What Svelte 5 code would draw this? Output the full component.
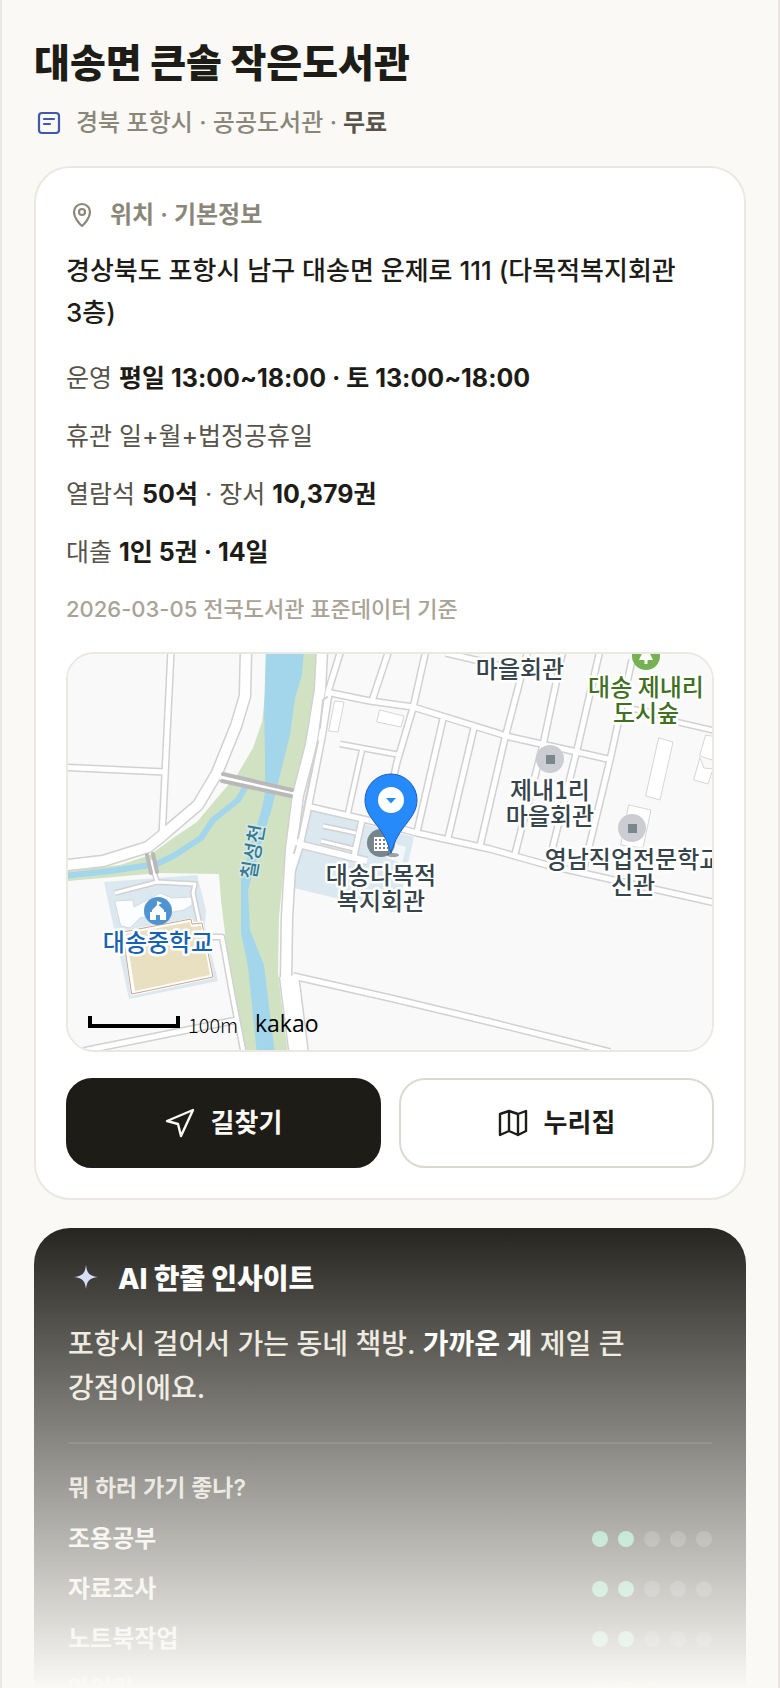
<script>
  const library = {
    name: '대송면 큰솔 작은도서관',
    region: '경북 포항시',
    type: '공공도서관',
    fee: '무료',
    address: '경상북도 포항시 남구 대송면 운제로 111 (다목적복지회관 3층)'
  };

  const purposes = [
    { label: '조용공부', score: 2 },
    { label: '자료조사', score: 2 },
    { label: '노트북작업', score: 2 },
    { label: '아이랑', score: 3 }
  ];

  // road centre lines, [path, width]
  const roads = [
    ['M246 650 L245 696 L236 726 L217 773 L198 805 L164 834 L148 847 L103 861 L60 866', 12],
    ['M171 650 L162 838', 7],
    ['M60 767 L165 772', 7],
    ['M322 650 L320 690 L311 745 L298 795 L291 850 L287 917 L286 980', 12],
    ['M329 690 L322 735 L307 812 L299 848 L290 876', 8],
    ['M289 976 L299 1055', 20],
    ['M341 650 L328 692', 7],
    ['M326 692 L370 701 L413 707 L510 737 L577 752 L612 760', 7],
    ['M389 650 L372 701', 7],
    ['M426 650 L413 708 L397 762 L384 822', 7],
    ['M443 719 L417 832', 7],
    ['M474 728 L448 838', 7],
    ['M528 650 L505 738 L480 846', 7],
    ['M563 650 L543 745 L515 854', 7],
    ['M600 650 L577 750 L549 862', 7],
    ['M632 660 L610 760 L583 872', 7],
    ['M306 806 L380 823 L417 833 L490 849 L547 865 L716 903', 7],
    ['M340 744 L400 755', 6],
    ['M362 750 L348 813', 6],
    ['M446 653 L497 665 L536 672', 7],
    ['M627 708 L650 712 L677 722 L716 731', 6],
    ['M293 976 L390 998 L490 1022 L610 1052', 7],
    ['M78 1052 L237 1020', 7],
    ['M212 937 L222 937 L232 993 L244 1055', 6],
    ['M302 845 L367 861', 8],
    ['M362 820 L354 856', 7],
    ['M323 826 L356 833', 5],
    ['M321 841 L354 849', 5],
    ['M115 893 L157 882 L195 884 L193 893 L199 921', 5],
    ['M151 860 L157 882', 5]
  ];

  const buildings = [
    'M335 701 L344 702 L338 732 L329 731 Z',
    'M380 710 L404 716 L401 727 L377 722 Z',
    'M659 738 L673 742 L660 800 L646 796 Z',
    'M629 805 L651 810 L643 848 L621 845 Z',
    'M706 735 L716 737 L712 760 L700 756 Z',
    'M700 758 L704 768 L713 769 L708 784 L694 780 Z'
  ];

  const places = [
    { lines: ['마을회관'], x: 520, y: 678 },
    { lines: ['대송 제내리', '도시숲'], x: 646, y: 696, kind: 'park' },
    { lines: ['제내1리', '마을회관'], x: 550, y: 799 },
    { lines: ['영남직업전문학교', '신관'], x: 633, y: 868 },
    { lines: ['대송다목적', '복지회관'], x: 381, y: 884 },
    { lines: ['대송중학교'], x: 158, y: 951, kind: 'school' }
  ];
</script>

<div class="page">
  <header>
    <h1>{library.name}</h1>
    <p class="meta">
      <svg class="meta-icon" viewBox="0 0 30 30" aria-hidden="true">
        <rect x="5" y="5" width="20" height="20" rx="3" />
        <path d="M10 11 H20 M10 16 H16" />
      </svg>
      <span>{library.region} · {library.type} ·</span>
      <strong>{library.fee}</strong>
    </p>
  </header>

  <section class="card">
    <h2>
      <svg class="label-icon" viewBox="0 0 32 32" aria-hidden="true">
        <path d="M16 27 C13 24.500 8 18.500 8 13 A8 8 0 0 1 24 13 C24 18.500 19 24.500 16 27 Z" />
        <circle cx="16" cy="13" r="3" />
      </svg>
      위치 · 기본정보
    </h2>
    <p class="address">{library.address}</p>
    <div class="facts">
      <p>운영 <strong>평일 13:00~18:00 · 토 13:00~18:00</strong></p>
      <p>휴관 일+월+법정공휴일</p>
      <p>열람석 <strong>50석</strong> · 장서 <strong>10,379권</strong></p>
      <p>대출 <strong>1인 5권 · 14일</strong></p>
      <p class="source">2026-03-05 전국도서관 표준데이터 기준</p>
    </div>

    <div class="map">
      <svg viewBox="68 654 644 396" preserveAspectRatio="xMidYMid slice" role="img" aria-label="지도">
        <rect x="0" y="600" width="800" height="500" fill="#f9f9f9" />

        <!-- river -->
        <path fill="#d1e2c2" d="M266 650 H317 L315 685 L307 738 L293 792 L285 855 L279 917 L278 973 L282 1007 L288 1055 H246 L227 950 L221 900 L219 874 L160 873 L68 881 V871 L120 865 L150 855 L173 838 L197 822 L217 798 L237 775 L253 748 L262 722 L265 695 Z" />
        <path fill="#a3d6eb" d="M266 650 H304 L302 675 L295 698 L290 735 L278 783 L272 808 L262 840 L248 890 L250 930 L264 965 L275 1055 H257 L248 967 L241 933 L241 880 L254 835 L262 808 L265 792 L265 755 L264 712 Z" />
        <path class="stream" d="M245 788 L238 800 L213 820 L201 838 L175 855 L157 864 L110 871 L64 876" />

        <!-- grounds -->
        <path fill="#dbe8f0" d="M310 810 L414 837 L397 913 L290 887 L302 846 Z" />
        <path fill="#dbe8f0" d="M104 882 L197 875 L206 910 L205 927 L218 981 L129 999 Z" />
        <path fill="#fff" d="M122 931 L192 918 L193 922 L203 921 L214 978 L131 996 Z" />
        <path class="track" d="M123 932 L191 919 L192 924 L202 923 L213 977 L132 994 Z" />
        <path fill="#e9dfc1" d="M126 934 L190 922 L191 927 L201 926 L210 975 L135 991 Z" />
        <path class="hall" d="M115 901 L133 900 L134 907 L160 893 L172 898 L192 897 L192 905 L184 910 L140 918 L130 928 L121 926 Z" />

        {#each roads as [d, width]}
          <path class="road-edge" {d} stroke-width={width + 1} />
        {/each}
        {#each roads as [d, width]}
          <path class="road" {d} stroke-width={width - 2} />
        {/each}
        <path class="median" d="M327 697 L323 700 L320 728 M318 741 L298 838 M296 846 L294 853" />

        {#each buildings as d}
          <path class="building" {d} />
        {/each}
        <path fill="#f2f7fb" d="M389 842 L406 847 L402 863 L386 858 Z" />

        <path class="bridge-deck" d="M222 778 L292 793" />
        <path class="bridge" d="M223 774 L292 790 M222 781 L291 796 M147 855 L151 873 M153 854 L157 872" />

        <!-- markers -->
        <circle cx="646" cy="656" r="14" fill="#76b152" />
        <path fill="#fff" d="M646 645 L653 660 H647.500 V664 H644.500 V660 H639 Z" />
        {#each [[550, 759], [632, 828]] as [cx, cy]}
          <circle {cx} {cy} r="14" fill="#cccdd2" />
          <rect x={cx - 4} y={cy - 4} width="9" height="9" fill="#7a888d" />
        {/each}
        <circle cx="158" cy="911" r="14" fill="#4f94d1" />
        <path fill="#fff" d="M157 901 L162 903 L158.500 905 L164 910 V912 H166 V920 H160 V915 H156 V920 H150 V912 H152 V910 L157 905 Z" />
        <circle cx="381" cy="843" r="14" fill="#77868d" />
        <rect x="374" y="837" width="14" height="14" fill="#fff" />
        <path class="windows" d="M375 840 H388 M375 844 H388 M375 848 H388" />

        <text class="river-name" text-anchor="middle" transform="translate(260 853) rotate(-80)">칠성천</text>
        {#each places as place}
          <text class="place {place.kind ?? ''}" text-anchor="middle">
            {#each place.lines as line, i}
              <tspan x={place.x} y={place.y + i * 26}>{line}</tspan>
            {/each}
          </text>
        {/each}

        <ellipse cx="393" cy="855" rx="6" ry="2" fill="#000" opacity="0.35" />
        <path class="pin" d="M391 853 C387 839 382 832 375 823 C369 815 365 809 365 800 A26 26 0 0 1 417 800 C417 809 413 815 407 823 C400 832 395 839 391 853 Z" />
        <circle cx="391" cy="800" r="13" fill="#fff" />
        <path fill="#268afa" d="M386 798 H396 L391 803.500 Z" />

        <path class="scale" d="M90 1016 V1026 H178 V1016" />
        <text class="scale-text" x="188" y="1033">100m</text>
        <text class="brand" x="255" y="1032">kakao</text>
      </svg>
    </div>

    <div class="actions">
      <button class="primary" type="button">
        <svg viewBox="0 0 30 30" aria-hidden="true">
          <path d="M28 2 L2 13 L13 16 L16 28 Z" />
        </svg>
        길찾기
      </button>
      <button type="button">
        <svg viewBox="0 0 30 30" aria-hidden="true">
          <path d="M2 6 L11 3 L20 6 L28 3 V23 L20 27 L11 23 L2 27 Z M11 3 V23 M20 6 V27" />
        </svg>
        누리집
      </button>
    </div>
  </section>

  <section class="insight">
    <h2>
      <svg viewBox="0 0 36 36" aria-hidden="true">
        <path d="M18 4 C19 12 21 15 30 16 C21 17 19 20 18 28 C17 20 15 17 6 16 C15 15 17 12 18 4 Z" />
      </svg>
      AI 한줄 인사이트
    </h2>
    <p class="summary">포항시 걸어서 가는 동네 책방. <strong>가까운 게</strong> 제일 큰 강점이에요.</p>

    <div class="purposes">
      <h3>뭐 하러 가기 좋나?</h3>
      <ul>
        {#each purposes as purpose}
          <li>
            <span>{purpose.label}</span>
            <span class="dots">
              {#each [1, 2, 3, 4, 5] as n}
                <i class:on={n <= purpose.score}></i>
              {/each}
            </span>
          </li>
        {/each}
      </ul>
    </div>
  </section>

  <div class="fade"></div>
</div>

<style>
  :global(body) {
    margin: 0;
    background: #faf9f5;
  }

  .page {
    position: relative;
    box-sizing: border-box;
    height: 100vh;
    overflow: hidden;
    padding: 38px 32px 0;
    border: solid #ebe8e1;
    border-width: 0 2px;
    color: #1d1c17;
    font-family: Inter, 'Noto Sans CJK KR', sans-serif;
    font-size: 24px;
    line-height: 38px;
    word-break: keep-all;
  }

  h1,
  h2,
  h3,
  p,
  ul {
    margin: 0;
    padding: 0;
  }

  h1 {
    font-size: 39px;
    font-weight: 800;
    line-height: 50px;
  }

  svg {
    flex: none;
    fill: none;
    stroke-linecap: round;
    stroke-linejoin: round;
  }

  .meta {
    display: flex;
    align-items: center;
    margin-top: 16px;
    color: #8b867a;
    font-weight: 500;
  }

  .meta strong {
    margin-left: 6px;
    color: #57534a;
    font-weight: 600;
  }

  .meta-icon {
    width: 30px;
    height: 30px;
    margin-right: 12px;
    stroke: #3f5aa9;
    stroke-width: 2.2;
  }

  .card {
    margin-top: 24px;
    padding: 28px 30px 30px;
    border: 2px solid #ebe8e1;
    border-radius: 36px;
    background: #fff;
  }

  .card h2 {
    display: flex;
    align-items: center;
    gap: 12px;
    color: #8b867a;
    font-size: 24px;
    font-weight: 600;
  }

  .label-icon {
    width: 32px;
    height: 32px;
    stroke: #8b867a;
    stroke-width: 2.2;
  }

  .address {
    margin-top: 16px;
    font-size: 26px;
    font-weight: 500;
    line-height: 42px;
  }

  .facts {
    display: flex;
    flex-direction: column;
    gap: 20px;
    margin-top: 25px;
    color: #57534a;
    font-size: 25px;
  }

  .facts strong {
    color: #1d1c17;
    font-weight: 700;
  }

  .facts .source {
    color: #a8a396;
    font-size: 22px;
    font-weight: 500;
    line-height: 36px;
  }

  .map {
    box-sizing: border-box;
    height: 400px;
    margin-top: 25px;
    overflow: hidden;
    border: 2px solid #ebe8e1;
    border-radius: 28px;
  }

  .map svg {
    display: block;
    width: 100%;
    height: 100%;
  }

  .road-edge {
    stroke: #d1d1d1;
    stroke-linecap: butt;
  }

  .road {
    stroke: #fff;
    stroke-linecap: butt;
  }

  .median {
    stroke: #d1d1d1;
    stroke-width: 2;
  }

  .stream {
    stroke: #a3d6eb;
    stroke-width: 6;
  }

  .track {
    stroke: #c9a58c;
    stroke-width: 1;
  }

  .hall {
    fill: #fcfdff;
    stroke: #d5dade;
  }

  .building {
    fill: #fff;
    stroke: #d6d6d6;
  }

  .bridge-deck {
    stroke: #fff;
    stroke-width: 5;
  }

  .bridge {
    stroke: #b9b9b9;
    stroke-width: 4;
  }

  .windows {
    stroke: #77868d;
    stroke-width: 2;
    stroke-dasharray: 2 2;
    stroke-linecap: butt;
  }

  .pin {
    fill: #268afa;
    stroke: #1860c8;
  }

  .scale {
    stroke: #000;
    stroke-width: 4;
    stroke-linecap: butt;
    stroke-linejoin: miter;
  }

  .map text {
    font-family: 'Noto Sans CJK KR', sans-serif;
  }

  .map .place,
  .map .river-name {
    fill: #36444b;
    stroke: #fff;
    stroke-width: 5;
    paint-order: stroke;
    font-size: 24px;
    font-weight: 500;
  }

  .map .park {
    fill: #41701f;
  }

  .map .school {
    fill: #1763b3;
  }

  .map .river-name {
    fill: #357894;
    stroke: #d5e9e6;
    stroke-width: 3;
    font-size: 20px;
  }

  .map .scale-text {
    fill: #000;
    font-size: 20px;
    font-weight: 300;
  }

  .map .brand {
    fill: #000;
    font-family: 'Open Sans', sans-serif;
    font-size: 23px;
    font-weight: 500;
  }

  .actions {
    display: grid;
    grid-template-columns: 1fr 1fr;
    gap: 18px;
    margin-top: 26px;
  }

  button {
    display: flex;
    align-items: center;
    justify-content: center;
    gap: 16px;
    height: 90px;
    padding: 0;
    border: 2px solid #dcd9d0;
    border-radius: 26px;
    background: #fff;
    color: #1d1c17;
    font: inherit;
    font-size: 26px;
    font-weight: 600;
  }

  button svg {
    width: 30px;
    height: 30px;
    stroke: currentColor;
    stroke-width: 2.4;
  }

  .primary {
    border-color: #1d1c17;
    background: #1d1c17;
    color: #faf9f5;
  }

  .insight {
    margin-top: 28px;
    padding: 32px 34px;
    border-radius: 36px;
    background: #1d1c17;
    color: #f1eee6;
  }

  .insight h2 {
    display: flex;
    align-items: center;
    gap: 14px;
    color: #fff;
    font-size: 28px;
    font-weight: 800;
  }

  .insight svg {
    width: 36px;
    height: 36px;
    fill: #d0d9fa;
  }

  .summary {
    margin-top: 24px;
    color: #e9e5da;
    font-size: 28px;
    font-weight: 500;
    line-height: 44px;
  }

  .summary strong {
    color: #fff;
    font-weight: 700;
  }

  .purposes {
    margin-top: 32px;
    padding-top: 26px;
    border-top: 2px solid #33322d;
  }

  h3 {
    color: #d8d4c8;
    font-size: 23px;
    font-weight: 600;
    line-height: 36px;
  }

  ul {
    margin-top: 8px;
    list-style: none;
  }

  li {
    display: flex;
    align-items: center;
    justify-content: space-between;
    line-height: 50px;
    font-weight: 600;
  }

  .dots {
    display: flex;
    gap: 10px;
  }

  .dots i {
    width: 16px;
    height: 16px;
    border-radius: 50%;
    background: #45443f;
  }

  .dots .on {
    background: #5cc49a;
  }

  .fade {
    position: absolute;
    right: -2px;
    bottom: 0;
    left: -2px;
    height: 480px;
    background: linear-gradient(rgba(250, 249, 245, 0), #faf9f5);
    pointer-events: none;
  }
</style>
